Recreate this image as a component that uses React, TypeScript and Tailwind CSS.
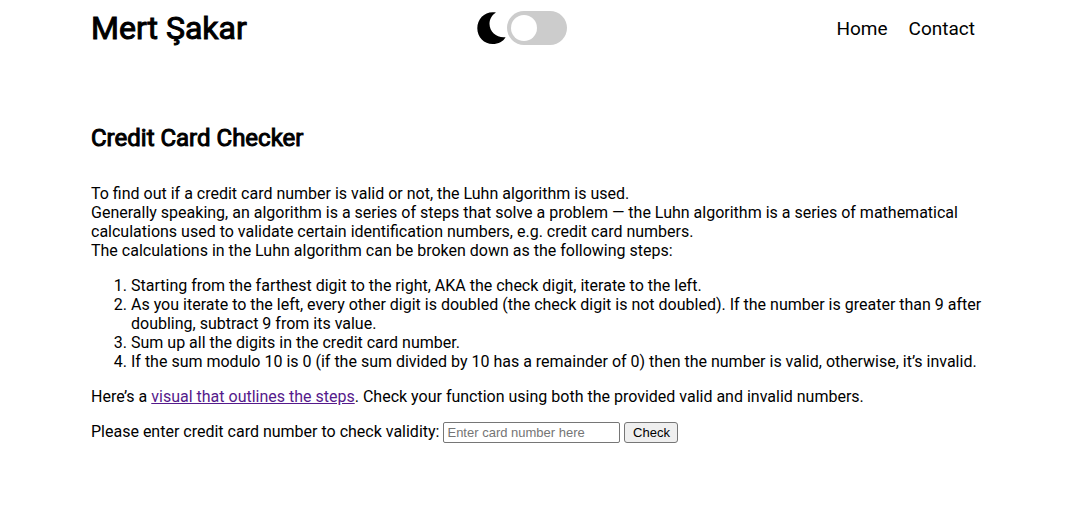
import { useState } from "react";

export default function App() {
  const [dark, setDark] = useState(false);
  return (
    <div className="px-[91px] font-['Roboto',sans-serif] text-base leading-[19px] text-black">
      <header className="flex h-14 items-center justify-between">
        <a href="#" className="text-[32px] leading-[38px] [-webkit-text-stroke:1px_black]">Mert Şakar</a>
        <div className="flex items-center">
          <svg viewBox="0 0 30 32" className="h-8 w-[30px]" aria-hidden="true">
            <path d="M19 0.5C8.8-1.5 0.3 6 0.3 16.2C0.3 25.3 7.2 32 15.6 32C21.6 32 26 29.6 28.6 25.2C20.4 26.4 12.5 20.3 12.5 11.8C12.5 7 15.2 2.9 19 0.5Z" />
          </svg>
          <label className="relative flex h-[34px] w-[60px] items-center rounded-full bg-[#ccc] px-1">
            <input type="checkbox" aria-label="Dark mode" checked={dark} onChange={(e) => setDark(e.target.checked)} className="peer absolute inset-0 size-full cursor-pointer opacity-0" />
            <span className="size-[26px] rounded-full bg-white transition peer-checked:translate-x-[26px]" />
          </label>
        </div>
        <nav className="flex gap-[21px] pt-px pr-[19px] pl-10 text-[19px] leading-6">
          <a href="#">Home</a>
          <a href="#">Contact</a>
        </nav>
      </header>
      <main className="pt-[68px]">
        <h2 className="mb-8 text-2xl leading-7 font-normal [-webkit-text-stroke:1px_black]">Credit Card Checker</h2>
        <p>To find out if a credit card number is valid or not, the Luhn algorithm is used.<br />
          Generally speaking, an algorithm is a series of steps that solve a problem — the Luhn algorithm is a series of mathematical calculations used to validate certain identification numbers, e.g. credit card numbers.<br />
          The calculations in the Luhn algorithm can be broken down as the following steps:</p>
        <ol className="my-4 list-decimal pl-10">
          <li>Starting from the farthest digit to the right, AKA the check digit, iterate to the left.</li>
          <li>As you iterate to the left, every other digit is doubled (the check digit is not doubled). If the number is greater than 9 after doubling, subtract 9 from its value.</li>
          <li>Sum up all the digits in the credit card number.</li>
          <li>If the sum modulo 10 is 0 (if the sum divided by 10 has a remainder of 0) then the number is valid, otherwise, it’s invalid.</li>
        </ol>
        <p>Here’s a <a href="#" className="text-[#551a8b] underline">visual that outlines the steps</a>. Check your function using both the provided valid and invalid numbers.</p>
        <form className="mt-4 flex items-start gap-1" onSubmit={(e) => e.preventDefault()}>
          <label htmlFor="card">Please enter credit card number to check validity:</label>
          <input id="card" type="text" placeholder="Enter card number here" className="h-[21px] w-[177px] rounded-[2px] border border-[#767676] px-[3px] font-['Liberation_Sans',sans-serif] text-[13px] placeholder:text-[#757575]" />
          <button type="submit" className="h-[21px] w-[54px] rounded-[3px] border border-[#767676] bg-[#efefef] font-['Liberation_Sans',sans-serif] text-[13px] leading-[15px]">Check</button>
        </form>
      </main>
    </div>
  );
}
